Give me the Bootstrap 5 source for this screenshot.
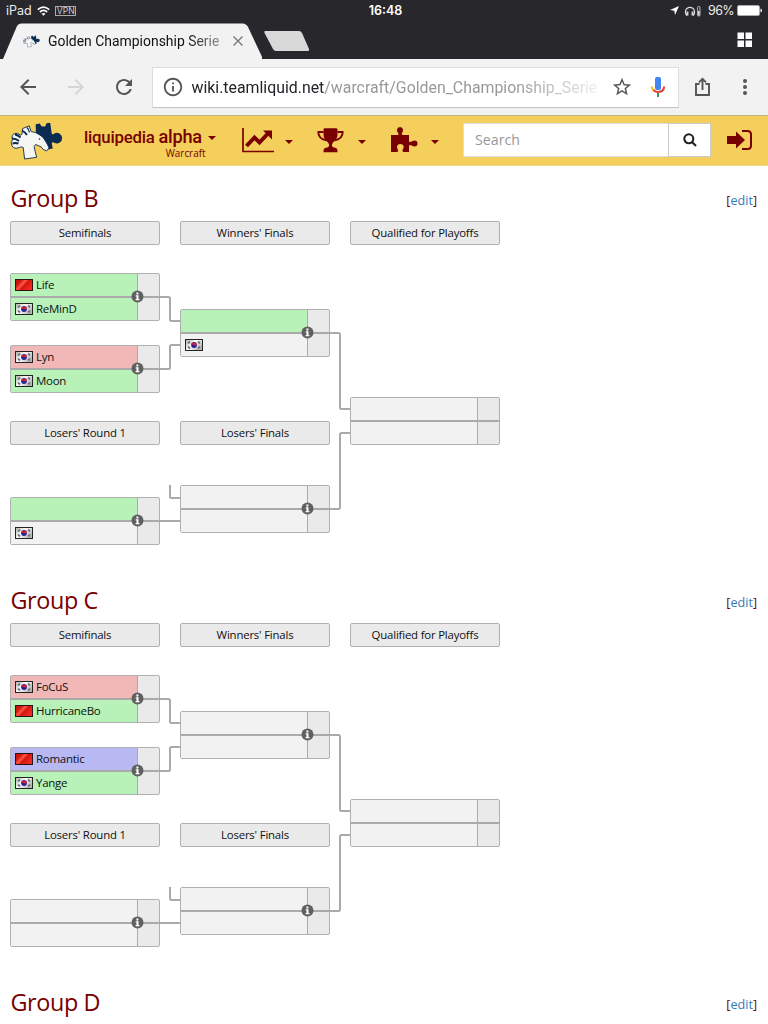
<!DOCTYPE html>
<html lang="en">
<head>
<meta charset="utf-8">
<meta name="viewport" content="width=device-width, initial-scale=1">
<title>Golden Championship Series</title>
<link href="https://cdn.jsdelivr.net/npm/bootstrap@5.3.0/dist/css/bootstrap.min.css" rel="stylesheet">
<style>
  body { font-family: "Open Sans", sans-serif; font-size: 12px; color: #111; background: #fff; height: 1024px; overflow: hidden; }
  svg { display: block; flex: none; }
  .chrome-ui { font-family: Roboto, sans-serif; }
  .status-bar { height: 20px; background: #28272c; color: #ececec; font: 12.5px/20px Inter, sans-serif; padding: 1px 6px 0; }
  .status-bar > div { flex: 1 1 0; }
  .vpn-tag { border: 1px solid #aaa; font-size: 8.7px; line-height: 8px; padding: 0 0 0 1px; color: #ccc; margin-left: 5px; }
  .tab-strip { height: 39px; background: #28272c; }
  .page-tab { width: 262px; height: 36px; margin-top: 3px; background: #f2f2f2; clip-path: path("M3 36 L17 3 Q18.500 0.5 21 0.5 H243 Q246 0.5 248 4 L263 36 Z"); padding-left: 23px; }
  .tab-title { font-size: 13.95px; width: 173px; margin-left: 8px; white-space: nowrap; color: #111; -webkit-mask-image: linear-gradient(90deg,#000 80%,rgba(0,0,0,.4) 100%); mask-image: linear-gradient(90deg,#000 80%,rgba(0,0,0,.4) 100%); }
  .tool-row { height: 56px; background: #f2f2f2; padding-left: 4px; color: #555; }
  .tool-cell { width: 48px; }
  .omnibox { width: 527px; height: 41px; margin-left: 4px; background: #fff; border: 1px solid #ddd; border-bottom-color: #c4c4c4; padding-left: 9px; font-size: 15.87px; }
  .address { width: 411px; margin: 1px 0 0 7.5px; white-space: nowrap; color: #999; -webkit-mask-image: linear-gradient(90deg,#000 78%,rgba(0,0,0,.1) 100%); mask-image: linear-gradient(90deg,#000 78%,rgba(0,0,0,.1) 100%); }
  .wiki-nav { height: 51px; background: #f4cf5b; border-top: 1px solid #c3b280; border-bottom: 1px solid #f2d987; padding-left: 10px; color: #780000; }
  .brand-text { width: 118px; }
  .brand-name { font: 500 16.8px/20px Roboto, sans-serif; letter-spacing: -.23px; white-space: nowrap; }
  .brand-sub { font-size: 9.9px; line-height: 12px; margin-right: -3.500px; }
  .caret { width: 0; height: 0; border: 4.2px solid transparent; border-top-color: #780000; border-bottom: 0; }
  .search-box { width: 248px; height: 34px; }
  .search-box .form-control { font-size: 14.2px; border-radius: 0; border-color: #ddd; padding: 0 11px 1px; color: #999; line-height: 30px; }
  .search-box .form-control::placeholder { color: #999; }
  .search-box .btn { width: 43px; border-radius: 0; border-color: #ccc; background: #fff; padding: 0; }
  .group-head { height: 36px; padding: 0 11px 0 10.5px; color: #780000; }
  .group-head h2 { font-size: 23.4px; line-height: 36px; font-weight: 400; margin: 0; letter-spacing: -.4px; }
  .edit-link { font-size: 12.6px; padding-top: 6px; }
  .edit-link a { color: #337ab7; text-decoration: none; }
  .group-block { height: 402px; }
  .bracket { height: 324px; margin-top: 5px; padding-left: 10px; }
  .round-col { width: 150px; }
  .round-name { height: 24px; border: 1px solid #b0b0b0; border-radius: 2px; background: #eaeaea; text-align: center; font-size: 11.4px; letter-spacing: -.19px; line-height: 22px; }
  .duel { height: 48px; position: relative; border: 1px solid #b0b0b0; border-radius: 2px; background: #eaeaea; }
  .duel::after { content: ""; position: absolute; left: 0; right: -1px; top: 22px; height: 2px; background: #aaa; }
  .player { width: 127px; height: 23px; border-right: 1px solid #aaa; background: #f2f2f2; padding-left: 4px; font-size: 11.5px; letter-spacing: -.28px; line-height: 22px; }
  .player svg { margin-right: 3px; }
  .player:first-child { padding-bottom: 1px; }
  .won { background: #b8f2b8; } .out { background: #f2b8b8; } .stay { background: #b8b8f2; }
  .info-dot { position: absolute; left: 120px; top: 16px; z-index: 1; }
  .gap-24 { margin-top: 24px; } .gap-28 { margin-top: 28px; } .gap-52 { margin-top: 52px; } .gap-64 { margin-top: 64px; } .gap-152 { margin-top: 152px; }
</style>
</head>
<body>
<svg width="0" height="0" class="position-absolute">
  <defs>
    <linearGradient id="redSheen" x1="0" y1="0" x2="1" y2=".6"><stop offset="0" stop-color="#b80c08"/><stop offset=".3" stop-color="#d81812"/><stop offset=".48" stop-color="#fa5a48"/><stop offset=".62" stop-color="#d81410"/><stop offset="1" stop-color="#f02c20"/></linearGradient>
    <linearGradient id="whiteSheen" x1="0" y1="0" x2="1" y2=".6"><stop offset="0" stop-color="#aaa"/><stop offset=".5" stop-color="#fff"/><stop offset="1" stop-color="#b4b4b4"/></linearGradient>
    <symbol id="cn" viewBox="0 0 18 12"><rect x=".5" y=".5" width="17" height="11" fill="url(#redSheen)" stroke="#2b1414"/></symbol>
    <symbol id="kr" viewBox="0 0 18 12"><rect x=".5" y=".5" width="17" height="11" fill="url(#whiteSheen)" stroke="#222"/><path d="M3 4.500l2-2M13 2.500l2 2M3 7.500l2 2M13 9.500l2-2" stroke="#777" stroke-width="1.800"/><circle cx="9" cy="6" r="2.900" fill="#23239c"/><path d="M6.200 6a2.900 2.900 0 0 1 5.700-.4q-1.200 1.600-2.900.4t-2.800.4" fill="#e01c30"/></symbol>
    <symbol id="info" viewBox="0 0 13 13"><circle cx="6.500" cy="6.500" r="6" fill="#606060"/><path d="M4.700 5.300h2.800v3.700h.9v1.300H4.600V9h.9V6.500h-.8zM5.400 2.500h2v1.900h-2z" fill="#fff"/></symbol>
    <symbol id="horse" viewBox="0 0 53 39">
      <path d="M25.700 2.300l4-.8 2 3h3.500l1.300-3.300 3.700-.4 1.500 10.700q1.300 2 3-.2a5.300 5.300 0 1 1 0 9.700q-2-1.500-3 0l1 5.500-7.700 1.500-9-8z" fill="#0b2b50"/>
      <path d="M12.700 6.500l6.600-2.600 1.800 5.600q5 .5 9 3.700 3.500 1.700 5 5.300 2.500 4 4 7.500l-2.500 3q-4-1-5.500-4.200l-5.500-2.300q-2.300 1.500-1 4.500l2 8.300-12 1.700-1.400-11.500q-2-1.200-4 0-5 2-7.200-1.500-1.800-4 .4-6Q1 12.500 5 11.500q3-1 5 1.500 1.500.5 2-1z" fill="#f6f6f4" stroke="#0b2b50" stroke-width=".9"/>
      <path d="M2 16.500q4 0 7 2.500M5 12.500q3 .5 5.500 3M12 8.500q3 1.500 5 4.500M2.500 21.500q3-1 6 0" stroke="#0b2b50" stroke-width="1.900" fill="none"/><path d="M17 5.500q2 2 2.500 5" stroke="#0b2b50" stroke-width="1.200" fill="none"/><circle cx="29.500" cy="17" r=".8" fill="#0b2b50"/>
    </symbol>
  </defs>
</svg>

<header class="chrome-ui">
  <div class="status-bar d-flex align-items-center">
    <div class="d-flex align-items-center"><span>iPad</span>
      <svg style="margin-left:5px" width="13" height="10" viewBox="0 0 13 10" fill="none" stroke="#fff" stroke-width="1.700"><path d="M.8 3.700Q6.500-1.400 12.200 3.700M2.900 6Q6.500 2.800 10.100 6"/><path d="M4.600 7.700Q6.500 6.200 8.400 7.700L6.500 9.700z" fill="#fff" stroke="none"/></svg>
      <span class="vpn-tag">VPN</span></div>
    <div class="text-center fw-semibold text-white"><span style="margin-left:3px">16:48</span></div>
    <div class="d-flex align-items-center justify-content-end">
      <svg width="9" height="9" viewBox="0 0 9 9"><path d="M9 0L5 9 4.300 4.700 0 4z" fill="#fff"/></svg>
      <svg style="margin-left:5px" width="18" height="12" viewBox="0 0 18 12" fill="none" stroke="#ddd" stroke-width="1.200"><path d="M3 10.500Q.8 9 1.700 5.500a4.500 4.500 0 0 1 8.600 0Q11.200 9 9 10.500"/><path d="M3.500 6.500v4M8.500 6.500v4" stroke-width="1.800"/><rect x="13.600" y="1.500" width="2.400" height="9.500" rx=".8" stroke-width=".8"/><path d="M14.800 6v4.500" stroke-width="1.600"/></svg>
      <span style="margin:0 3px 0 6px;letter-spacing:-.6px">96%</span>
      <svg width="25" height="11" viewBox="0 0 25 11"><rect x=".5" y=".5" width="22" height="10" rx="1.500" fill="#fff" stroke="#aaa"/><path d="M23.500 3.500v4q1.500-.5 1.500-2t-1.500-2z" fill="#fff"/></svg>
    </div>
  </div>
  <div class="tab-strip d-flex align-items-start">
    <div class="page-tab d-flex align-items-center">
      <svg width="17" height="13"><use href="#horse"/></svg>
      <div class="tab-title">Golden Championship Serie</div>
      <svg style="margin-left:11px" width="12" height="12" viewBox="0 0 12 12" stroke="#777" stroke-width="1.400"><path d="M1.500 1.500l9 9M10.500 1.500l-9 9"/></svg>
    </div>
    <svg width="48" height="22" viewBox="0 0 48 22" style="margin:11px 0 0 1px"><path d="M2 0h34q2 0 3 2l7 16q.6 2-1 2H13q-2 0-3-2L1.500 2Q1 0 2 0z" fill="#d9d9d9"/></svg>
    <svg class="ms-auto" width="15" height="15" viewBox="0 0 15 15" fill="#fff" style="margin:12px 16px 0 0"><path d="M.5.500h6.500v6.500H.5zM8.500.500H15v6.500H8.500zM.5 8.500h6.500V15H.5zM8.500 8.500H15V15H8.500z"/></svg>
  </div>
  <div class="tool-row d-flex align-items-center">
    <div class="tool-cell d-flex justify-content-center"><svg width="24" height="24" viewBox="0 0 24 24" fill="#555"><path d="M20 11H7.830l5.590-5.590L12 4l-8 8 8 8 1.410-1.410L7.830 13H20z"/></svg></div>
    <div class="tool-cell d-flex justify-content-center"><svg width="24" height="24" viewBox="0 0 24 24" fill="#d5d5d5"><path d="M12 4l-1.410 1.410L16.170 11H4v2h12.170l-5.580 5.590L12 20l8-8z"/></svg></div>
    <div class="tool-cell d-flex justify-content-center"><svg width="24" height="24" viewBox="0 0 24 24" fill="#555"><path d="M17.650 6.350C16.200 4.900 14.210 4 12 4c-4.420 0-7.990 3.580-7.990 8s3.570 8 7.990 8c3.730 0 6.840-2.550 7.730-6h-2.080c-.82 2.330-3.040 4-5.650 4-3.310 0-6-2.690-6-6s2.690-6 6-6c1.660 0 3.140.69 4.220 1.780L13 11h7V4l-2.350 2.350z"/></svg></div>
    <div class="omnibox d-flex align-items-center">
      <svg width="22" height="22" viewBox="0 0 24 24" fill="#555"><path d="M11 17h2v-6h-2v6zm1-15C6.480 2 2 6.480 2 12s4.480 10 10 10 10-4.480 10-10S17.520 2 12 2zm0 18c-4.410 0-8-3.590-8-8s3.590-8 8-8 8 3.590 8 8-3.590 8-8 8zM11 9h2V7h-2v2z"/></svg>
      <div class="address"><span class="text-dark">wiki.teamliquid.net</span>/warcraft/Golden_Championship_Serie</div>
      <svg width="22" height="22" viewBox="0 0 24 24" fill="#555" style="margin-left:8px"><path d="M22 9.240l-7.190-.62L12 2 9.190 8.630 2 9.240l5.460 4.730L5.820 21 12 17.270 18.180 21l-1.630-7.030L22 9.240zM12 15.400l-3.760 2.270 1-4.280-3.320-2.880 4.380-.38L12 6.100l1.710 4.040 4.380.38-3.320 2.880 1 4.280L12 15.400z"/></svg>
      <svg width="16" height="22" viewBox="0 0 16 22" fill="none" stroke-width="2" style="margin-left:17px"><rect x="5" y="1" width="6" height="13" rx="2" fill="#4285f4"/><path d="M1.700 10.500q.2 2.300 2 4" stroke="#fbbc05"/><path d="M3.300 14q2 2 4.700 2 5.500 0 6.300-5.500" stroke="#ea4335"/><path d="M8 17v4" stroke="#3a9b5c"/></svg>
    </div>
    <div class="d-flex justify-content-center" style="width:47px"><svg width="15" height="20" viewBox="0 0 15 20" fill="none" stroke="#555" stroke-width="1.900"><path d="M4.500 7H1v11h13V7h-3.500M7.500 13V2M4 5.300l3.500-3.500L11 5.300"/></svg></div>
    <div class="d-flex justify-content-center" style="width:38px"><svg width="4" height="16" viewBox="0 0 4 16" fill="#555"><circle cx="2" cy="2" r="2"/><circle cx="2" cy="8" r="2"/><circle cx="2" cy="14" r="2"/></svg></div>
  </div>
</header>

<nav class="wiki-nav d-flex align-items-center">
  <svg width="53" height="39" style="margin-top:2px"><use href="#horse"/></svg>
  <div class="d-flex align-items-start" style="margin:5px 0 0 21px">
    <div class="brand-text"><div class="brand-name">liquipedia <span style="font-size:18.200px">alpha</span></div><div class="brand-sub text-end">Warcraft</div></div>
    <div class="caret" style="margin:9px 0 0 6px"></div>
  </div>
  <svg width="32" height="25" viewBox="0 0 32 25" style="margin-left:25.600px"><path d="M1 0v23.500h31" fill="none" stroke="#780000" stroke-width="1.700"/><path d="M4.500 18l8-8.500 5 5 8-8.500" fill="none" stroke="#780000" stroke-width="4"/><path d="M21 2.500h9v9z" fill="#780000"/></svg>
  <div class="caret" style="margin:3px 0 0 11px"></div>
  <svg width="27" height="25" viewBox="0 0 27 25" style="margin-left:24px"><path d="M6.500 4H1.300Q1 10 9 12.500M20.500 4h5.200Q26 10 18 12.500" fill="none" stroke="#780000" stroke-width="1.800"/><path d="M6.500 1.500Q6.500.3 8 .3h11q1.500 0 1.500 1.200v5q0 4.500-4.500 8-1.500 1.500-1 3.500.6 1.500 3 1.700 2.500.3 2.500 3.800v.8h-14v-.8q0-3.500 2.500-3.800 2.400-.2 3-1.700.5-2-1-3.500-4.500-3.500-4.500-8z" fill="#780000"/></svg>
  <div class="caret" style="margin:3px 0 0 14px"></div>
  <svg width="27" height="27" viewBox="0 0 27 27" style="margin:-3px 0 0 25px"><path d="M0 9h5.500q2.500 0 2-1.500-1.700-2-1.500-4Q6.300 1 9 1t3 2.500q.2 2-1.400 4Q10.500 9 12.500 9H18v5.500q0 2 1.500 1.500 2-1.500 4-1.500 3 .2 3 3t-3 3q-2 0-4-1.400-1.500-.3-1.500 1.400V26h-5.500q-1.500-.3-1-2 1.500-2 1.200-3.700Q12 18 9.300 18T6 20.300Q5.800 22 7 24q.8 1.500-1 2H0z" fill="#780000"/></svg>
  <div class="caret" style="margin:3px 0 0 13.500px"></div>
  <div class="search-box input-group" style="margin:-1px 0 0 24px"><input class="form-control shadow-none" type="text" placeholder="Search" aria-label="Search"><button class="btn d-flex align-items-center justify-content-center" type="button" aria-label="Go"><svg width="14" height="14" viewBox="0 0 14 14" fill="none" stroke="#222" stroke-width="2.100"><circle cx="5.800" cy="5.800" r="4.500"/><path d="M9 9l4 4"/></svg></button></div>
  <svg width="25" height="20" viewBox="0 0 25 20" style="margin:-1px 0 0 16px"><path d="M0 6h9V1.500L18 10l-9 8.500V14H0z" fill="#780000"/><path d="M15 1h5.500q3.500 0 3.500 3.500v11q0 3.500-3.500 3.500H15" fill="none" stroke="#780000" stroke-width="2"/></svg>
</nav>

<main style="padding-top:14px">
  <section class="group-block">
    <div class="group-head d-flex justify-content-between align-items-center"><h2>Group B</h2><span class="edit-link">[<a href="#">edit</a>]</span></div>
    <div class="bracket d-flex">
      <div class="round-col">
        <div class="round-name">Semifinals</div>
        <div class="duel gap-28"><div class="player won d-flex align-items-center"><svg width="18" height="12"><use href="#cn"/></svg>Life</div><div class="player won d-flex align-items-center"><svg width="18" height="12"><use href="#kr"/></svg>ReMinD</div><svg class="info-dot" width="13" height="13"><use href="#info"/></svg></div>
        <div class="duel gap-24"><div class="player out d-flex align-items-center"><svg width="18" height="12"><use href="#kr"/></svg>Lyn</div><div class="player won d-flex align-items-center"><svg width="18" height="12"><use href="#kr"/></svg>Moon</div><svg class="info-dot" width="13" height="13"><use href="#info"/></svg></div>
        <div class="round-name gap-28">Losers' Round 1</div>
        <div class="duel gap-52"><div class="player won"></div><div class="player d-flex align-items-center"><svg width="18" height="12"><use href="#kr"/></svg></div><svg class="info-dot" width="13" height="13"><use href="#info"/></svg></div>
      </div>
      <svg width="20" height="324" fill="none" stroke="#aaa" stroke-width="2"><path d="M0 76H8.500Q10 76 10 77.500V98.500Q10 100 11.500 100H20M0 148H8.500Q10 148 10 146.500V125.500Q10 124 11.500 124H20M10 264V275.500Q10 277 11.500 277H20M0 300H20"/></svg>
      <div class="round-col">
        <div class="round-name">Winners' Finals</div>
        <div class="duel gap-64"><div class="player won"></div><div class="player d-flex align-items-center"><svg width="18" height="12"><use href="#kr"/></svg></div><svg class="info-dot" width="13" height="13"><use href="#info"/></svg></div>
        <div class="round-name gap-64">Losers' Finals</div>
        <div class="duel" style="margin-top:40px"><div class="player"></div><div class="player"></div><svg class="info-dot" width="13" height="13"><use href="#info"/></svg></div>
      </div>
      <svg width="20" height="324" fill="none" stroke="#aaa" stroke-width="2"><path d="M0 112H8.500Q10 112 10 113.500V186.500Q10 188 11.500 188H20M0 288H8.500Q10 288 10 286.500V213.500Q10 212 11.500 212H20"/></svg>
      <div class="round-col">
        <div class="round-name">Qualified for Playoffs</div>
        <div class="duel gap-152"><div class="player"></div><div class="player"></div></div>
      </div>
    </div>
  </section>

  <section class="group-block">
    <div class="group-head d-flex justify-content-between align-items-center"><h2>Group C</h2><span class="edit-link">[<a href="#">edit</a>]</span></div>
    <div class="bracket d-flex">
      <div class="round-col">
        <div class="round-name">Semifinals</div>
        <div class="duel gap-28"><div class="player out d-flex align-items-center"><svg width="18" height="12"><use href="#kr"/></svg>FoCuS</div><div class="player won d-flex align-items-center"><svg width="18" height="12"><use href="#cn"/></svg>HurricaneBo</div><svg class="info-dot" width="13" height="13"><use href="#info"/></svg></div>
        <div class="duel gap-24"><div class="player stay d-flex align-items-center"><svg width="18" height="12"><use href="#cn"/></svg>Romantic</div><div class="player won d-flex align-items-center"><svg width="18" height="12"><use href="#kr"/></svg>Yange</div><svg class="info-dot" width="13" height="13"><use href="#info"/></svg></div>
        <div class="round-name gap-28">Losers' Round 1</div>
        <div class="duel gap-52"><div class="player"></div><div class="player"></div><svg class="info-dot" width="13" height="13"><use href="#info"/></svg></div>
      </div>
      <svg width="20" height="324" fill="none" stroke="#aaa" stroke-width="2"><path d="M0 76H8.500Q10 76 10 77.500V98.500Q10 100 11.500 100H20M0 148H8.500Q10 148 10 146.500V125.500Q10 124 11.500 124H20M10 264V275.500Q10 277 11.500 277H20M0 300H20"/></svg>
      <div class="round-col">
        <div class="round-name">Winners' Finals</div>
        <div class="duel gap-64"><div class="player"></div><div class="player"></div><svg class="info-dot" width="13" height="13"><use href="#info"/></svg></div>
        <div class="round-name gap-64">Losers' Finals</div>
        <div class="duel" style="margin-top:40px"><div class="player"></div><div class="player"></div><svg class="info-dot" width="13" height="13"><use href="#info"/></svg></div>
      </div>
      <svg width="20" height="324" fill="none" stroke="#aaa" stroke-width="2"><path d="M0 112H8.500Q10 112 10 113.500V186.500Q10 188 11.500 188H20M0 288H8.500Q10 288 10 286.500V213.500Q10 212 11.500 212H20"/></svg>
      <div class="round-col">
        <div class="round-name">Qualified for Playoffs</div>
        <div class="duel gap-152"><div class="player"></div><div class="player"></div></div>
      </div>
    </div>
  </section>

  <section>
    <div class="group-head d-flex justify-content-between align-items-center"><h2>Group D</h2><span class="edit-link">[<a href="#">edit</a>]</span></div>
  </section>
</main>
<script src="https://cdn.jsdelivr.net/npm/bootstrap@5.3.0/dist/js/bootstrap.bundle.min.js"></script>
</body>
</html>
